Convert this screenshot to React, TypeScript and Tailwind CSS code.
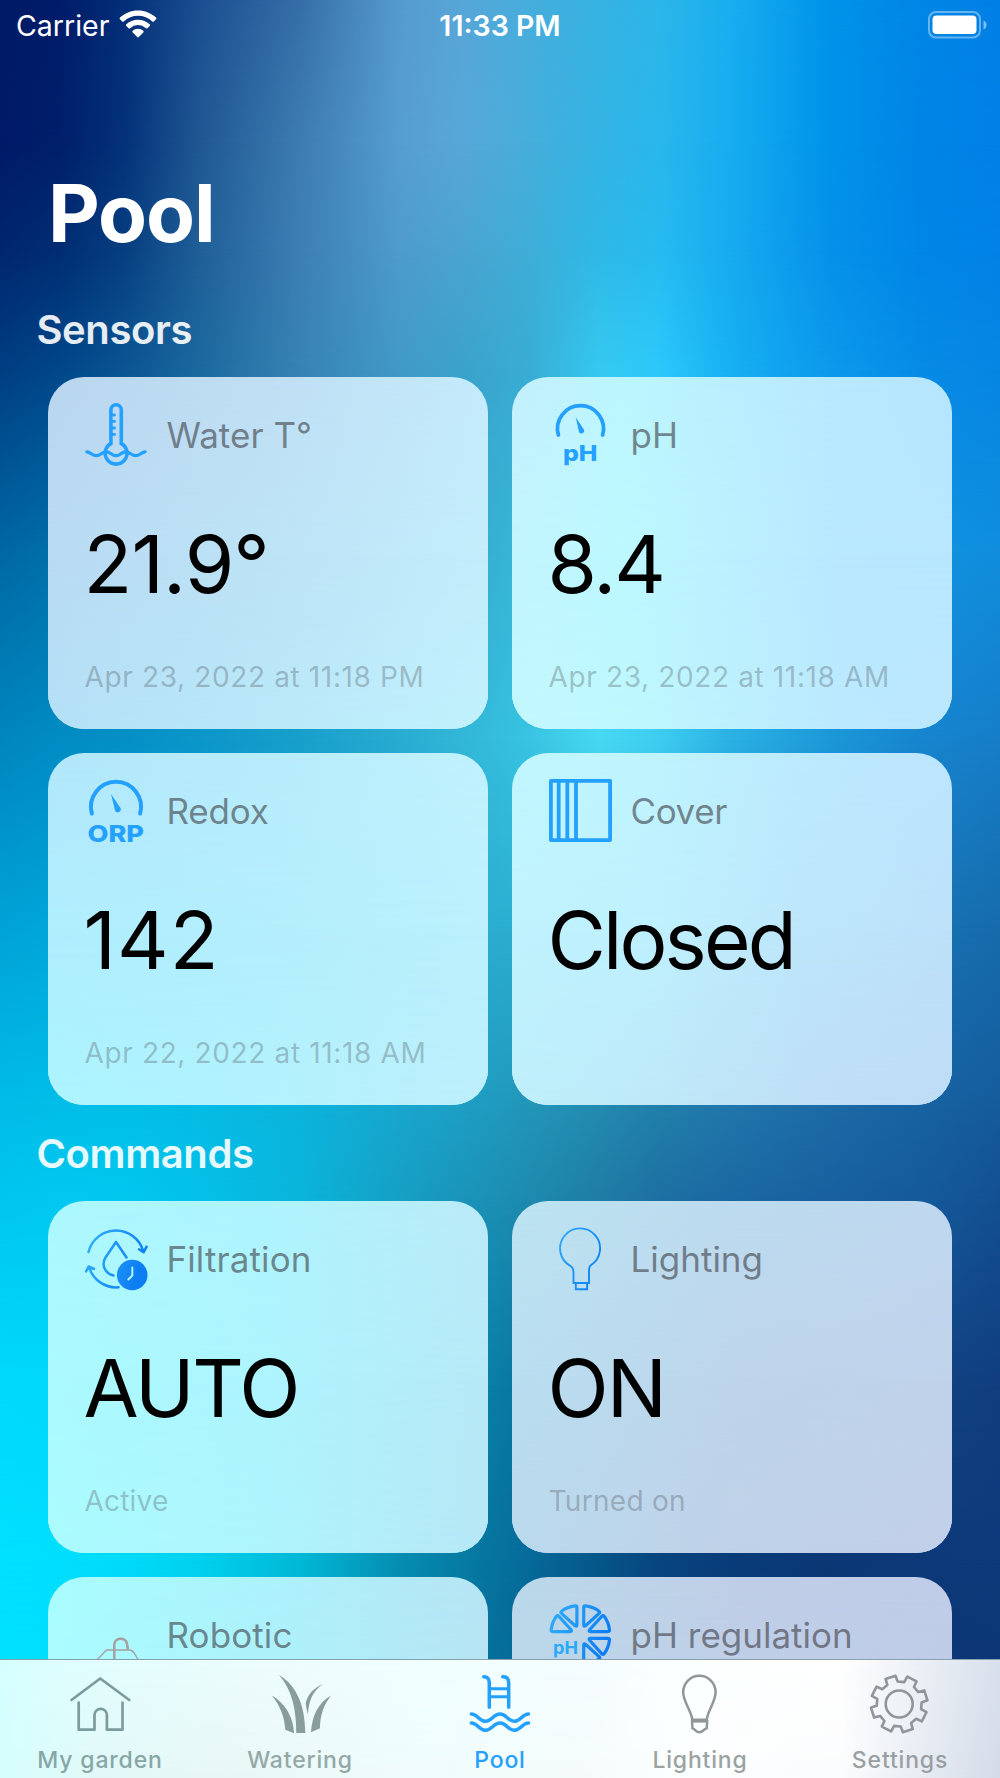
import React from "react";

type Row = [number, string[]];

interface MeshProps {
  rows: Row[];
  stops?: number[];
}

// Two-dimensional gradient: every row is a horizontal gradient that fades in
// over the one above it.
const Mesh: React.FC<MeshProps> = ({ rows, stops }) => (
  <div className="absolute inset-0">
    {rows.map(([y, colors], i) => {
      const line = colors
        .map((c, j) => (stops ? `${c} ${stops[j]}%` : c))
        .join(", ");
      const mask =
        i === 0
          ? undefined
          : `linear-gradient(to bottom, transparent ${rows[i - 1][0]}%, black ${y}%)`;
      return (
        <div
          key={y}
          className="absolute inset-0"
          style={{
            backgroundImage: `linear-gradient(to right, ${line})`,
            maskImage: mask,
          }}
        />
      );
    })}
  </div>
);

const pageStops = [0, 6, 12.5, 20, 30, 40, 46, 53, 60, 66, 73, 83, 92, 100];
const pageRows: Row[] = [
  [0, ["#001b66", "#001c6a", "#042f78", "#1b4f91", "#366fa8", "#569bd0", "#58a6d8", "#46aedd", "#36b3e3", "#2cb6e9", "#19aef0", "#0093ea", "#0086e6", "#0080e6"]],
  [8, ["#001a68", "#001f6b", "#04327a", "#205893", "#3d7cb2", "#569ed1", "#58a7d8", "#46aedb", "#34b4e4", "#29b7ec", "#17adf0", "#0093ea", "#0085e6", "#0081e6"]],
  [14, ["#00266f", "#002d73", "#073f80", "#205f98", "#3d7fb5", "#4e9ccc", "#4ba4d0", "#3eaed8", "#2fb8e6", "#26bbf0", "#17abf0", "#0591ea", "#0086e7", "#0082e6"]],
  [20.8, ["#003e82", "#00478a", "#0b5593", "#1b699f", "#3783b4", "#419ac5", "#3ba2cb", "#39add4", "#35c9f0", "#2cc8fa", "#17b0f2", "#0c99ec", "#068be6", "#0686e3"]],
  [31, ["#0068a4", "#0070aa", "#057ab0", "#0c86b8", "#2095c0", "#2fa3c8", "#33aacd", "#38b9da", "#40d2f3", "#38ccf5", "#20b4ee", "#129dea", "#1092e1", "#108edd"]],
  [41.6, ["#0086bf", "#008cc4", "#0490c6", "#0c96ca", "#189fcb", "#28acd2", "#32b6d8", "#38c4e2", "#46d8f2", "#3dccf0", "#2bb1e4", "#1c98d8", "#1785cf", "#167dc8"]],
  [52, ["#00a2d6", "#00a6da", "#00aadb", "#06addb", "#10aed8", "#20add3", "#28add0", "#2dafd2", "#36b0d4", "#309fc8", "#268fc0", "#1c80bc", "#1873b3", "#166cac"]],
  [62.3, ["#00bce8", "#00bee8", "#01bfe8", "#05bce5", "#0bb4dc", "#18a6ce", "#1d9fc5", "#2295b8", "#238ab0", "#217fab", "#2076ab", "#1c6aa6", "#1762a2", "#155b9c"]],
  [67.5, ["#00c6ef", "#00c8f0", "#01c7ef", "#04c0e8", "#0ab4da", "#169fc4", "#1a94ba", "#1d8aae", "#1f7ca4", "#1d70a2", "#1b68a1", "#18609f", "#155a9b", "#135092"]],
  [78, ["#00d9fc", "#00d8fc", "#00d2f8", "#00c9ec", "#04b4d8", "#0894bb", "#0985ac", "#0a749f", "#0b6493", "#0c578b", "#104e89", "#124887", "#124382", "#103d7e"]],
  [87.7, ["#00e0ff", "#00defe", "#00daf9", "#00d1ee", "#02b8d6", "#068db2", "#067ca4", "#066a99", "#06568a", "#084580", "#093c7a", "#0b3875", "#0d397a", "#0d3a7b"]],
  [100, ["#00e0ff", "#00defe", "#00daf8", "#00cfec", "#02b6d5", "#0686ac", "#06739d", "#066292", "#064d80", "#073d76", "#083672", "#0a3370", "#0b3270", "#0c3370"]],
];

const ACCENT = "#24a0ff";

const Gradient: React.FC<{ id: string }> = ({ id }) => (
  <defs>
    <linearGradient id={id} gradientUnits="userSpaceOnUse" x1="0" y1="0" x2="63" y2="20">
      <stop offset="0" stopColor="#33b1fb" />
      <stop offset="1" stopColor="#0c7df2" />
    </linearGradient>
  </defs>
);

const iconClass = "w-[63px] h-[63px] shrink-0 overflow-visible";

const ThermometerIcon = () => (
  <svg viewBox="0 0 63 63" className={iconClass} fill="none" stroke={ACCENT} strokeWidth="3.6" strokeLinecap="round">
    <path d="M25.9 40.6V7a5.2 5.2 0 0 1 10.4 0v33.6a10.9 10.9 0 1 1-10.4 0z" />
    <path d="M26 12h3.5M26 18.4h3.5M26 25h3.5M26 31.4h3.5" strokeWidth="2.8" />
    <path d="M1.8 48.8c4 0 5 3.9 9.5 3.9s5.5-3.9 10-3.9 5 3.9 9.7 3.9 5.2-3.9 9.7-3.9 5.5 3.9 10 3.9 5.5-3.9 9.5-3.9" strokeWidth="3.2" />
  </svg>
);

const PhIcon = () => (
  <svg viewBox="0 0 63 63" className={iconClass} fill="none">
    <path d="M9.4 32A23 23 0 1 1 53.6 32" stroke={ACCENT} strokeWidth="3.8" strokeLinecap="round" />
    <path d="M26.7 14.3L35.2 27a2.9 2.9 0 0 1-5.2 2.3z" fill={ACCENT} />
    <text x="14" y="58.3" textLength="34.500" lengthAdjust="spacingAndGlyphs" fill={ACCENT} className="font-['Inter'] text-[22px] font-extrabold">
      pH
    </text>
  </svg>
);

const OrpIcon = () => (
  <svg viewBox="0 0 63 63" className={iconClass} fill="none">
    <path d="M6.9 34.5A25 25 0 1 1 55.1 34.5" stroke={ACCENT} strokeWidth="4" strokeLinecap="round" />
    <path d="M26 15L35.5 29a3 3 0 0 1-5.5 2.5z" fill={ACCENT} />
    <text x="2.5" y="62.5" textLength="56.5" lengthAdjust="spacingAndGlyphs" fill={ACCENT} className="font-['Inter'] text-[23.5px] font-extrabold">
      ORP
    </text>
  </svg>
);

const CoverIcon = () => (
  <svg viewBox="0 0 63 63" className={iconClass} fill="none" stroke={ACCENT} strokeWidth="3.8" strokeLinejoin="round">
    <path d="M1.900 1.900h59.200v59.200H1.900zM9.700 2v59M18.300 2v59M27 2v59" />
  </svg>
);

const FiltrationIcon = () => (
  <svg viewBox="0 0 63 63" className={iconClass} fill="none" strokeLinecap="round" strokeLinejoin="round">
    <Gradient id="filtration" />
    <g stroke="url(#filtration)" strokeWidth="2.5">
      <path d="M3.5 25A28.300 28.300 0 0 1 58.300 24.500M54 22.200l4.600 3 3-5.500" />
      <path d="M33.500 60.300A28.500 28.500 0 0 1 4 40M1 44.500l2.600-5 5.400 2.500" />
      <path d="M41.500 30.500L31 15 20.500 30.500c-4.500 7.500-.5 16 8 18" />
    </g>
    <circle cx="47.200" cy="48" r="15.300" fill="url(#filtration)" />
    <path d="M47.300 40.500v8l-4 4" stroke="#b0f6ff" strokeWidth="2" />
  </svg>
);

const LightOnIcon = () => (
  <svg viewBox="0 0 63 63" className={iconClass} fill="none" stroke="url(#bulb)" strokeWidth="1.9">
    <Gradient id="bulb" />
    <path d="M24.500 56V46c0-3-1-6-3.500-7.300A20 20 0 1 1 41.800 38.300C39.700 40 40 43 40 46v10z" />
    <path d="M26.800 56v6.200h11.300V56" />
  </svg>
);

const RobotIcon = () => (
  <svg viewBox="0 0 63 63" className={iconClass} fill="none" stroke="#a5a0a2">
    <path d="M29.300 58V42c0-8 11.500-8.500 12.700-1l1 6" strokeWidth="2.500" />
    <path d="M11 58l10.500-11H44.500c4 0 5 4 9 10h4" strokeWidth="1.300" />
  </svg>
);

const slice = "M3.400-27.500C3.400-29 4-29.500 5.500-29.100 10.500-28.500 15-26.700 18.700-23.800 19.700-23 19.500-22.300 18.800-21.600L5.500-9.500C4-8.300 3.400-8.700 3.400-10.200z";

const RegulationIcon = () => (
  <svg viewBox="0 0 63 63" className={iconClass} fill="none">
    <Gradient id="regulation" />
    <mask id="slices" maskUnits="userSpaceOnUse" x="-1" y="-1" width="66" height="66">
      <g transform="translate(31.300 32)" stroke="white" strokeWidth="3.2" strokeLinejoin="round">
        <path d={slice} />
        <path d={slice} transform="scale(-1 1)" />
        <path d={slice} transform="matrix(0 -1 -1 0 0 0)" />
        <path d={slice} transform="matrix(0 -1 1 0 0 0)" />
        <path d={slice} transform="rotate(90)" />
        <path d={slice} transform="scale(1 -1)" />
      </g>
    </mask>
    <rect width="64" height="64" fill="url(#regulation)" mask="url(#slices)" />
    <text x="4" y="51" textLength="25" lengthAdjust="spacingAndGlyphs" fill="#2ba9fb" className="font-['Inter'] text-[17.5px] font-bold">
      pH
    </text>
  </svg>
);

interface CardProps {
  icon: React.ReactNode;
  title: string;
  value?: string;
  footer?: string;
  rows: Row[];
  titleClass?: string;
  valueClass?: string;
  footerClass?: string;
}

const Card: React.FC<CardProps> = (props) => (
  <div className="relative h-[352px] overflow-hidden rounded-[36px]">
    <Mesh rows={props.rows} />
    <div className="relative flex flex-col pt-[26px] pl-[36.500px]">
      <div className="flex h-16 items-start">
        {props.icon}
        <div className={`ml-[19px] text-[35px] leading-[64px] text-[#3c3c43]/60 ${props.titleClass ?? ""}`}>
          {props.title}
        </div>
      </div>
      <div className={`mt-[49px] -ml-px h-24 text-[80px] leading-[96px] text-black ${props.valueClass ?? ""}`}>
        {props.value}
      </div>
      <div className={`mt-[47.5px] text-[28px] leading-[34px] text-[#3c3c43]/30 ${props.footerClass ?? "tracking-[0.64px]"}`}>
        {props.footer}
      </div>
    </div>
  </div>
);

const SectionTitle: React.FC<{ children: React.ReactNode }> = ({ children }) => (
  <h2 className="flex h-24 items-center pt-px pl-[36.5px] text-[40px] leading-[48px] font-semibold tracking-[-0.4px] text-white/90">
    {children}
  </h2>
);

const sensors: CardProps[] = [
  {
    icon: <ThermometerIcon />,
    title: "Water T°",
    value: "21.9°",
    valueClass: "tracking-[-0.9px]",
    footer: "Apr 23, 2022 at 11:18 PM",
    rows: [
      [0, ["#bad6ef", "#c0dff4", "#c5ebfc"]],
      [50, ["#b9dbf3", "#bde3f6", "#c3edfc"]],
      [100, ["#b4e0f7", "#b9e8f9", "#c1f1fd"]],
    ],
  },
  {
    icon: <PhIcon />,
    title: "pH",
    value: "8.4",
    valueClass: "tracking-[-2px]",
    footer: "Apr 23, 2022 at 11:18 AM",
    rows: [
      [0, ["#c4f0fd", "#bcf6fe", "#bbefff", "#b9e9ff", "#b6e6ff"]],
      [50, ["#c2f5fe", "#bdf8ff", "#bcf0ff", "#b9e8ff", "#b8e7ff"]],
      [100, ["#c3f7fe", "#bef8fe", "#bdf0fe", "#bbe9ff", "#bbe7ff"]],
    ],
  },
  {
    icon: <OrpIcon />,
    title: "Redox",
    titleClass: "tracking-[-0.2px]",
    value: "142",
    valueClass: "tracking-[1px]",
    footer: "Apr 22, 2022 at 11:18 AM",
    rows: [
      [0, ["#b2e7fb", "#b8ecfc", "#c1f2fe"]],
      [50, ["#b0eefe", "#b4eefc", "#bbf1fd"]],
      [100, ["#abf4ff", "#b2f2fe", "#bdeefb"]],
    ],
  },
  {
    icon: <CoverIcon />,
    title: "Cover",
    titleClass: "tracking-[-0.4px]",
    value: "Closed",
    valueClass: "tracking-[-2.9px]",
    rows: [
      [0, ["#c1f7fe", "#bff4fe", "#bdeafe", "#bce6ff"]],
      [50, ["#c0f2fe", "#bff0fe", "#bde6fb", "#bde1fa"]],
      [100, ["#beeffb", "#bee8f8", "#bfdff6", "#bedcf5"]],
    ],
  },
];

const commands: CardProps[] = [
  {
    icon: <FiltrationIcon />,
    title: "Filtration",
    titleClass: "tracking-[0.1px]",
    value: "AUTO",
    valueClass: "tracking-[-2.2px]",
    footer: "Active",
    footerClass: "tracking-[0.2px]",
    rows: [
      [0, ["#adf8ff", "#aff4fe", "#bbebf8"]],
      [50, ["#abfaff", "#aef4fe", "#b7e9f7"]],
      [100, ["#aafcff", "#aef4fd", "#b7e7f5"]],
    ],
  },
  {
    icon: <LightOnIcon />,
    title: "Lighting",
    value: "ON",
    valueClass: "tracking-[-2px]",
    footer: "Turned on",
    footerClass: "tracking-[0.3px]",
    rows: [
      [0, ["#bce4f2", "#bddbef", "#bfd8ef"]],
      [50, ["#b9def0", "#bed5eb", "#c0d3eb"]],
      [100, ["#bad9ec", "#bfd1e8", "#c2cfe9"]],
    ],
  },
  {
    icon: <RobotIcon />,
    title: "Robotic",
    titleClass: "tracking-[0.1px]",
    rows: [
      [0, ["#aafdff", "#adf2fc", "#b7e5f4"]],
      [100, ["#a9fdff", "#aef1fb", "#b6e4f3"]],
    ],
  },
  {
    icon: <RegulationIcon />,
    title: "pH regulation",
    rows: [
      [0, ["#bbd9eb", "#bfcfe7", "#c0cde9"]],
      [100, ["#bad6ea", "#c0cde6", "#bfcbe7"]],
    ],
  },
];

const tabIconClass = "h-[60px] w-[60px] overflow-visible";

const HouseIcon = () => (
  <svg viewBox="0 0 60 60" className={tabIconClass} fill="none" stroke="#7b9c9d" strokeWidth="2.7" strokeLinecap="round" strokeLinejoin="round">
    <path d="M1.500 26L30.200 4.500 59.300 26" />
    <path d="M8.700 28.500V55.700H24.500V41a6.200 6.200 0 0 1 12.400 0v14.700H52.500V28.500" />
  </svg>
);

const GrassIcon = () => (
  <svg viewBox="0 0 60 60" className={tabIconClass} fill="#889d9c">
    <path d="M9 1C26 11 35 30 35.300 59H26.300C26.300 35 22 16 9 1z" />
    <path d="M1.700 21.500C15 29 23.500 43 24 59.200L15.300 55.700C14.500 43 10 31 1.700 21.500z" />
    <path d="M52.500 10.300C43 17 38.500 27 38 40.500 37 37 36 33 35.700 29 38 20 44 14 52.500 10.300z" />
    <path d="M61 21.500C53.500 31 50 42 50 54.300L41 58.200C42 42 48 29 61 21.500z" />
  </svg>
);

const PoolIcon = () => (
  <svg viewBox="0 0 60 60" className={tabIconClass} fill="none" stroke={ACCENT} strokeWidth="3.5" strokeLinecap="round">
    <path d="M13.700 2.800c3.700 0 5.600 2 5.600 6V33.300M32.700 2.800c4 0 6 2 6 6V33.300" />
    <path d="M19.300 14.700h19.400M19.300 22.700h19.400" strokeWidth="3" />
    <path d="M1.300 40c6 0 8 7.300 14.200 7.300S23.500 40 30 40s8 7.300 14.200 7.300S52.500 40 58.500 40M1.300 49c6 0 8 7.300 14.200 7.300S23.500 49 30 49s8 7.300 14.200 7.300S52.500 49 58.500 49" />
  </svg>
);

const BulbIcon = () => (
  <svg viewBox="0 0 60 60" className={tabIconClass} fill="none" stroke="#8f9797" strokeWidth="2.5" strokeLinejoin="round">
    <path d="M22.300 45.500C21 36 13.200 28 13.200 18a16.200 16.200 0 0 1 32.400 0C45.600 28 37.800 36 36.800 45.500" />
    <path d="M22 47h15.200l-.5 7.300c-3 1-4 4-7.300 4s-4-3-7-4z" />
    <path d="M21 46.500h17" strokeWidth="4" />
  </svg>
);

const GEAR_TEETH = 8;

const gearPath = () => {
  const points: string[] = [];
  for (let i = 0; i < GEAR_TEETH; i++) {
    const mid = -108 + (360 / GEAR_TEETH) * i;
    const corners = [
      [-14, 22.5],
      [-10.5, 28.5],
      [10.5, 28.5],
      [14, 22.5],
    ];
    corners.forEach(([offset, radius]) => {
      const a = ((mid + offset) * Math.PI) / 180;
      points.push(`${(29.2 + radius * Math.cos(a)).toFixed(2)} ${(30 + radius * Math.sin(a)).toFixed(2)}`);
    });
  }
  return `M${points.join("L")}z`;
};

const GearIcon = () => (
  <svg viewBox="0 0 60 60" className={tabIconClass} fill="none" stroke="#8f9598" strokeWidth="2.6" strokeLinejoin="round">
    <path d={gearPath()} />
    <circle cx="29.200" cy="30" r="13.500" />
  </svg>
);

const tabs = [
  { label: "My garden", icon: <HouseIcon />, color: "text-[#87a6a6]" },
  { label: "Watering", icon: <GrassIcon />, color: "text-[#94a8a7]" },
  { label: "Pool", icon: <PoolIcon />, color: "text-[#24a0ff]" },
  { label: "Lighting", icon: <BulbIcon />, color: "text-[#9ba2a2]" },
  { label: "Settings", icon: <GearIcon />, color: "text-[#999fa3]" },
];

const StatusBar = () => (
  <div className="relative grid h-[51px] shrink-0 grid-cols-3 items-center text-[28.5px] leading-[51px] text-white">
    <div className="flex items-center gap-[10px] pl-[16px]">
      <span>Carrier</span>
      <svg viewBox="0 0 38 28" className="mb-[4px] h-[28px] w-[38px]" fill="white">
        <path d="M19 .5c7 0 13.300 2.700 18 7.100.5.500.5 1.200 0 1.700l-2.200 2.200c-.4.400-1 .400-1.500 0A20.800 20.800 0 0 0 4.700 11.500c-.5.400-1.100.400-1.500 0L1 9.300c-.5-.5-.5-1.200 0-1.700C5.700 3.200 12 .5 19 .5z" />
        <path d="M19 9.700c4.500 0 8.600 1.700 11.700 4.600.5.500.5 1.100 0 1.600l-2.300 2.300c-.4.400-1 .400-1.500 0a11.600 11.600 0 0 0-15.800 0c-.5.400-1.100.400-1.500 0l-2.300-2.300c-.5-.5-.5-1.100 0-1.600A17 17 0 0 1 19 9.700z" />
        <path d="M19 18.800c2 0 3.900.8 5.300 2 .5.500.5 1.100 0 1.600l-4.500 4.600c-.5.500-1.100.500-1.600 0l-4.500-4.600c-.5-.5-.5-1.100 0-1.600 1.400-1.200 3.300-2 5.300-2z" />
      </svg>
    </div>
    <div className="text-center font-semibold">11:33 PM</div>
    <div className="flex justify-end pr-[12px]">
      <svg viewBox="0 0 60 28" className="mb-[2px] h-[28px] w-[60px]">
        <rect x="1" y="1" width="51" height="25.500" rx="7" fill="none" stroke="white" strokeOpacity=".4" strokeWidth="2" />
        <rect x="4.500" y="4.500" width="44" height="18.500" rx="4" fill="white" />
        <path d="M55.500 9.500c4 1.500 4 7.500 0 9z" fill="white" fillOpacity=".5" />
      </svg>
    </div>
  </div>
);

const App: React.FC = () => (
  <div className="relative flex h-[1778px] w-[1000px] flex-col overflow-hidden font-['Inter',sans-serif]">
    <Mesh rows={pageRows} stops={pageStops} />
    <StatusBar />
    <main className="relative min-h-0 flex-1 overflow-hidden">
      <h1 className="mt-[114px] mb-[20px] pl-[48px] text-[80px] leading-[96px] font-bold tracking-[-1.1px] text-white">
        Pool
      </h1>
      <SectionTitle>Sensors</SectionTitle>
      <div className="grid grid-cols-2 gap-6 px-12">
        {sensors.map((s) => (
          <Card key={s.title} {...s} />
        ))}
      </div>
      <SectionTitle>Commands</SectionTitle>
      <div className="grid grid-cols-2 gap-6 px-12">
        {commands.map((c) => (
          <Card key={c.title} {...c} />
        ))}
      </div>
    </main>
    <nav className="relative h-[119px] shrink-0 border-t border-[#86a0ac]">
      <Mesh
        rows={[
          [0, ["#d6ffff", "#e3fefe", "#edfdfd", "#f0ffff", "#f5fdfe", "#fcffff", "#ffffff", "#d9e1ed"]],
          [100, ["#d6fefe", "#e2f8f8", "#e9f7f6", "#effdfc", "#f5fbfb", "#fcffff", "#fbfcfd", "#d4dbe8"]],
        ]}
        stops={[0, 10, 25, 42, 58, 68, 84, 100]}
      />
      <div className="relative grid grid-cols-5 pt-[14px]">
        {tabs.map((tab) => (
          <div key={tab.label} className="flex flex-col items-center">
            {tab.icon}
            <div className={`mt-[12px] text-[23px] leading-[28px] font-medium tracking-[0.036em] ${tab.color}`}>
              {tab.label}
            </div>
          </div>
        ))}
      </div>
    </nav>
  </div>
);

export default App;
